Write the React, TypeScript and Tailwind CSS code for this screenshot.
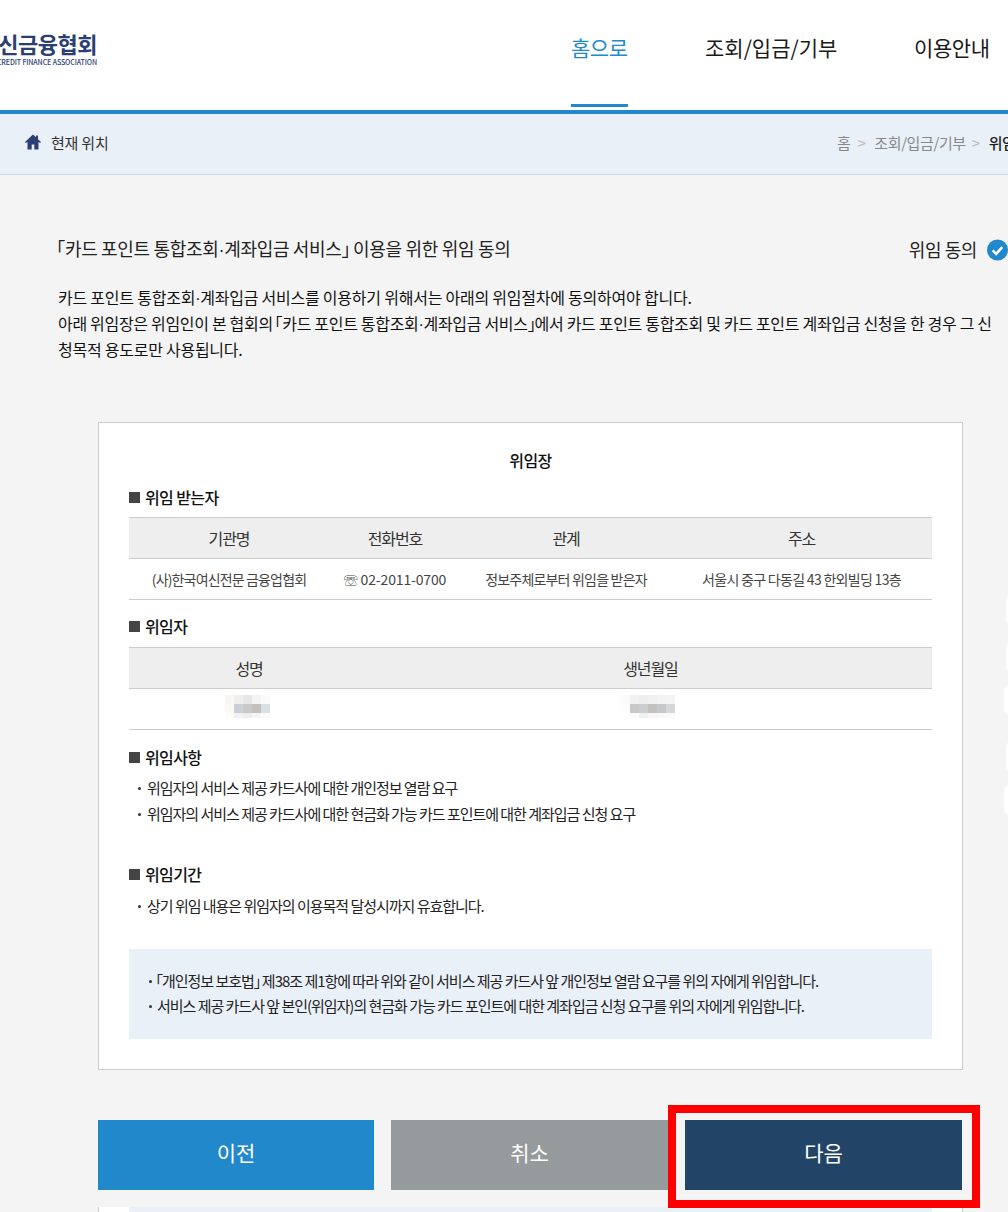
const headCell = "flex items-center justify-center text-[16px] text-[#333] tracking-[-1.1px] pb-[1px]"
const bodyCell = "flex items-center justify-center text-[14px] text-[#444] whitespace-nowrap"

function SectionTitle({ children, className }: { children: string; className: string }) {
  return (
    <div className={`flex items-center gap-[5px] h-[22px] text-[16px] font-medium text-[#111] tracking-[-0.6px] ${className}`}>
      <span className="w-[11px] h-[11px] bg-[#444]" />
      {children}
    </div>
  )
}

// Mosaic that hides the personal data in the screenshot
function Pixelated({ rows }: { rows: string[][] }) {
  return (
    <div className="flex flex-col">
      {rows.map((row, i) => (
        <div key={i} className={i === 2 ? "flex h-[5px]" : "flex h-[9px]"}>
          {row.map((c, j) => (
            <span key={j} className={`w-[9px] h-full ${c}`} />
          ))}
        </div>
      ))}
    </div>
  )
}

// Noto's corner brackets and middle dot are full width, the screenshot's are narrow
const Open = () => <span className="ml-[-0.6em]">「</span>
const Close = () => <span className="mr-[-0.55em]">」</span>
const Dot = () => <span className="font-['Liberation_Sans',sans-serif] leading-[0]">·</span>

function Item({ children }: { children: React.ReactNode }) {
  return (
    <li className="flex items-center h-[26px]">
      <span className="w-[3px] h-[3px] ml-[9px] mr-[6px] bg-[#333] rounded-full" />
      <span>{children}</span>
    </li>
  )
}

export default function App() {
  return (
    <div className="relative w-[1008px] h-[1212px] overflow-hidden bg-[#f4f4f4] font-['Noto_Sans_CJK_KR',sans-serif]">
      {/* Header */}
      <header className="relative flex h-[114px] bg-white border-b-4 border-[#2288cc]">
        <div className="w-[97px] mt-[30px] overflow-hidden flex flex-col items-end">
          <div className="text-[22px] leading-[26px] font-bold text-[#2b3f73] whitespace-nowrap tracking-[-0.5px]">여신금융협회</div>
          <div className="text-[7px] leading-[8px] mt-[2px] font-medium text-[#2b3f73] whitespace-nowrap tracking-[-0.1px]">CREDIT FINANCE ASSOCIATION</div>
        </div>
        <nav className="flex items-start pt-[30px] text-[21px] leading-[34px] text-[#1a1a1a] whitespace-nowrap">
          <div className="relative ml-[474px] w-[57px] h-[77px] text-[#2288cc] tracking-[-0.5px]">
            홈으로
            <span className="absolute left-0 right-0 bottom-0 h-[3px] bg-[#2288cc]" />
          </div>
          <div className="ml-[77px] w-[132px] tracking-[0px]">조회/입금/기부</div>
          <div className="ml-[77px] tracking-[-0.4px]">이용안내</div>
        </nav>
      </header>

      {/* Breadcrumb */}
      <div className="flex items-center justify-between h-[61px] pb-[2px] bg-[#eaf0f8] border-b border-[#c5dde0] whitespace-nowrap">
        <div className="flex items-center pl-[25px] text-[15px] text-[#333] tracking-[-0.2px]">
          <svg viewBox="0 0 16 16" className="w-[16px] h-[16px] -mt-[3px]">
            <path d="M8 0.5 0 8l1 1 1.5-1.3V15.5h4.2V10.5h2.6v5h4.2V7.7L15 9l1-1-3-2.8V1.5h-2v1.8z" fill="#2b3f73" />
          </svg>
          <span className="ml-[10px]">현재 위치</span>
        </div>
        <div className="flex w-[171px] shrink-0 overflow-hidden text-[15px] text-[#888] tracking-[-0.4px]">
          <span>홈</span>
          <span className="ml-[7px] text-[#bbb]">&gt;</span>
          <span className="ml-[9px]">조회/입금/기부</span>
          <span className="ml-[6px] text-[#bbb]">&gt;</span>
          <span className="ml-[9px] text-[#222] font-medium">위임</span>
        </div>
      </div>

      {/* Intro */}
      <div className="flex items-center justify-between mt-[61px] h-[26px] pl-[58px] whitespace-nowrap">
        <div className="text-[18px] text-[#222] tracking-[-0.32px] -mt-[1px]">
          <Open />카드 포인트 통합조회<Dot />계좌입금 서비스<Close /> 이용을 위한 위임 동의
        </div>
        <div className="flex items-center text-[18px] text-[#222] tracking-[-0.4px]">
          위임 동의
          <svg viewBox="0 0 22 22" className="ml-[10px] w-[21px] h-[22px] mt-[1px]">
            <circle cx="11" cy="11" r="11" fill="#2288cc" />
            <path d="M6 11.5l3.6 3.6L16 8" fill="none" stroke="#fff" strokeWidth="2.6" />
          </svg>
        </div>
      </div>
      <p className="mt-[22px] ml-[58px] h-[78px] text-[16px] leading-[26px] text-[#111] whitespace-nowrap">
        <span className="tracking-[-0.23px]">카드 포인트 통합조회<Dot />계좌입금 서비스를 이용하기 위해서는 아래의 위임절차에 동의하여야 합니다.</span>
        <br />
        <span className="tracking-[-0.31px]">아래 위임장은 위임인이 본 협회의 <Open />카드 포인트 통합조회<Dot />계좌입금 서비스<Close />에서 카드 포인트 통합조회 및 카드 포인트 계좌입금 신청을 한 경우 그 신</span>
        <br />
        <span className="tracking-[-0.25px]">청목적 용도로만 사용됩니다.</span>
      </p>

      {/* Power of attorney card */}
      <section className="ml-[98px] mt-[60px] w-[865px] h-[648px] bg-white border border-[#ccc] px-[30px] pt-[24px]">
        <h2 className="h-[26px] text-center text-[16px] leading-[26px] font-medium text-[#111] tracking-[-0.6px]">위임장</h2>
        <SectionTitle className="mt-[13px]">위임 받는자</SectionTitle>
        <div className="mt-[9px] grid grid-cols-[200px_132px_210px_261px] grid-rows-[41px_40px] border-t border-b border-[#ccc]">
          <div className={`${headCell} bg-[#eee] border-b border-[#ccc]`}>기관명</div>
          <div className={`${headCell} bg-[#eee] border-b border-[#ccc]`}>전화번호</div>
          <div className={`${headCell} bg-[#eee] border-b border-[#ccc]`}>관계</div>
          <div className={`${headCell} bg-[#eee] border-b border-[#ccc]`}>주소</div>
          <div className={`${bodyCell} tracking-[-0.85px]`}>(사)한국여신전문 금융업협회</div>
          <div className={`${bodyCell} tracking-[-0.15px]`}>
            <span className="mr-[3px] text-[14px] text-[#444]">☏</span>02-2011-0700
          </div>
          <div className={`${bodyCell} tracking-[-0.8px]`}>정보주체로부터 위임을 받은자</div>
          <div className={`${bodyCell} tracking-[-0.7px]`}>서울시 중구 다동길 43 한외빌딩 13층</div>
        </div>

        <SectionTitle className="mt-[15px]">위임자</SectionTitle>
        <div className="mt-[10px] grid grid-cols-[240px_563px] grid-rows-[41px_40px] border-t border-b border-[#ccc]">
          <div className={`${headCell} bg-[#eee] border-b border-[#ccc]`}>성명</div>
          <div className={`${headCell} bg-[#eee] border-b border-[#ccc]`}>생년월일</div>
          <div className="flex items-center justify-center pr-[3px] pb-[5px]">
            <Pixelated
              rows={[
                ["bg-[#faf6f4]", "bg-[#eceeef]", "bg-[#e7e7e7]", "bg-[#f6f4f2]", "bg-[#f8fafc]"],
                ["bg-[#fbf8f6]", "bg-[#ccd0d4]", "bg-[#c9c8c8]", "bg-[#c4bfbd]", "bg-[#d8dfe5]"],
                ["bg-[#fdfbfa]", "bg-[#f2f2f3]", "bg-[#eeeeee]", "bg-[#f6f5f5]", "bg-[#f9fafc]"],
              ]}
            />
          </div>
          <div className="flex items-center justify-center pr-[5px] pb-[5px]">
            <Pixelated
              rows={[
                ["bg-[#fbfbfb]", "bg-[#f1f1f1]", "bg-[#eeeeee]", "bg-[#f0f0f0]", "bg-[#f2f3f4]", "bg-[#f4f4f5]"],
                ["bg-[#fdfdfd]", "bg-[#c9c9c9]", "bg-[#cdcdcd]", "bg-[#c2c1c0]", "bg-[#c4c8cb]", "bg-[#d6d8d8]"],
                ["bg-[#ffffff]", "bg-[#fcfcfc]", "bg-[#eff1f4]", "bg-[#f6f6f6]", "bg-[#f8f8f8]", "bg-[#fafafa]"],
              ]}
            />
          </div>
        </div>

        <SectionTitle className="mt-[16px]">위임사항</SectionTitle>
        <ul className="mt-[7px] text-[15px] text-[#222] tracking-[-1.02px] whitespace-nowrap">
          <Item>위임자의 서비스 제공 카드사에 대한 개인정보 열람 요구</Item>
          <Item>위임자의 서비스 제공 카드사에 대한 현금화 가능 카드 포인트에 대한 계좌입금 신청 요구</Item>
        </ul>

        <SectionTitle className="mt-[36px]">위임기간</SectionTitle>
        <ul className="mt-[8px] text-[15px] text-[#222] tracking-[-1.02px] whitespace-nowrap">
          <Item>상기 위임 내용은 위임자의 이용목적 달성시까지 유효합니다.</Item>
        </ul>

        <div className="mt-[30px] h-[90px] bg-[#eaf0f8] pt-[20px] text-[15px] text-[#222] tracking-[-1.02px] whitespace-nowrap">
          <ul>
            <li className="flex items-center h-[25px]">
              <span className="w-[3px] h-[3px] ml-[20px] mr-[5px] bg-[#333] rounded-full" />
              <span><Open />개인정보 보호법<Close /> 제38조 제1항에 따라 위와 같이 서비스 제공 카드사 앞 개인정보 열람 요구를 위의 자에게 위임합니다.</span>
            </li>
            <li className="flex items-center h-[25px]">
              <span className="w-[3px] h-[3px] ml-[20px] mr-[5px] bg-[#333] rounded-full" />
              <span>서비스 제공 카드사 앞 본인(위임자)의 현금화 가능 카드 포인트에 대한 계좌입금 신청 요구를 위의 자에게 위임합니다.</span>
            </li>
          </ul>
        </div>
      </section>

      {/* Buttons */}
      <div className="flex gap-[17px] ml-[98px] mt-[50px] text-[21px] text-white">
        <button className="w-[276px] h-[70px] pb-[4px] bg-[#2288cc]">이전</button>
        <button className="w-[277px] h-[70px] pb-[4px] bg-[#959a9d]">취소</button>
        <button className="w-[277px] h-[70px] pb-[4px] bg-[#224466]">다음</button>
      </div>

      {/* Next card peeking in at the fold */}
      <div className="ml-[98px] mt-[17px] w-[865px] h-[20px] bg-white border-l border-r border-[#ccc] px-[30px]">
        <div className="h-full bg-[#eaf0f8]" />
      </div>

      {/* Red highlight over the next button */}
      <div className="absolute left-[668px] top-[1105px] w-[312px] h-[103px] border-[8px] border-[#ff0000]" />

      {/* Faint scallops on the right edge */}
      <div className="absolute left-[1006px] top-[595px] w-[10px] h-[30px] rounded-full bg-white blur-[1px]" />
      <div className="absolute left-[1006px] top-[642px] w-[10px] h-[30px] rounded-full bg-white blur-[1px]" />
      <div className="absolute left-[1004px] top-[685px] w-[12px] h-[30px] rounded-full bg-white blur-[1px]" />
      <div className="absolute left-[1006px] top-[742px] w-[10px] h-[30px] rounded-full bg-white blur-[1px]" />
      <div className="absolute left-[1004px] top-[785px] w-[12px] h-[30px] rounded-full bg-white blur-[1px]" />
    </div>
  )
}
